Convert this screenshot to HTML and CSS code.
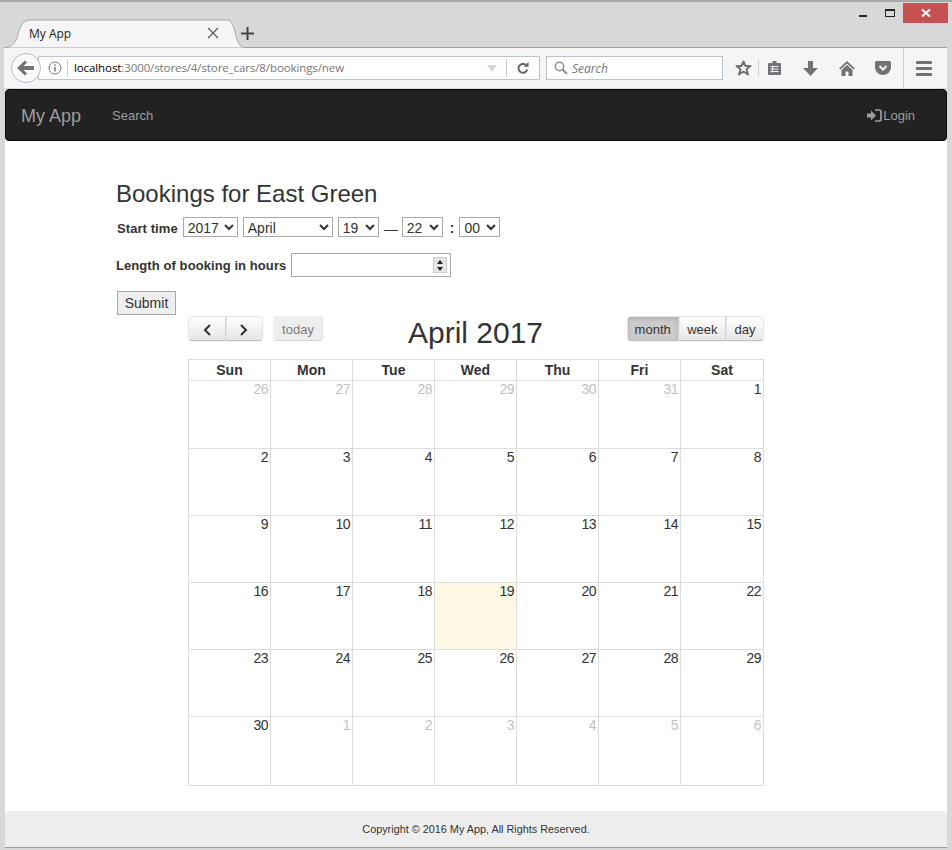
FILE: index.html
```html
<!DOCTYPE html>
<html>
<head>
  <meta charset="utf-8">
  <title>My App</title>
  <link rel="stylesheet" href="styles.css">
</head>
<body>
<div class="window">
  <div class="tabstrip">
    <div class="tab">
      <svg class="tab-shape" width="242" height="29" viewBox="0 0 242 29"><path d="M2 28.500C9 28 12 24 14 19C16 10 19 1 27 1H224C229 1 231 8 233 17C235 25 238 28.500 242 28.500" fill="#f5f5f5" stroke="#a3a9b1"/></svg>
      <span class="tab-title">My App</span>
      <svg class="tab-close" width="12" height="12" viewBox="0 0 12 12"><path d="M1 1L11 11M11 1L1 11" stroke="#555" stroke-width="1.1"/></svg>
    </div>
    <svg class="tab-new" width="13" height="13" viewBox="0 0 13 13"><path d="M6.500 0V13M0 6.500H13" stroke="#444" stroke-width="2"/></svg>
    <div class="winctl">
      <span class="win-min"></span>
      <span class="win-max"></span>
      <span class="win-close"><svg width="10" height="10" viewBox="0 0 10 10"><path d="M1 1.500L9 8.500M9 1.500L1 8.500" stroke="#fff" stroke-width="2"/></svg></span>
    </div>
  </div>

  <div class="toolbar">
    <div class="back"><svg width="18" height="16" viewBox="0 0 18 16"><path d="M0 8L8 0.500L10 2.500L6.500 6H17V10H6.500L10 13.500L8 15.500Z" fill="#6f7276"/></svg></div>
    <div class="urlbar">
      <svg class="info" width="14" height="14" viewBox="0 0 14 14"><circle cx="7" cy="7" r="6" fill="none" stroke="#777"/><path d="M7 6V10.500M7 3.200V4.800" stroke="#777" stroke-width="1.500"/></svg>
      <span class="url"><b>localhost</b>:3000/stores/4/store_cars/8/bookings/new</span>
      <svg class="dropmark" width="10" height="7" viewBox="0 0 10 7"><path d="M0 0H10L5 7Z" fill="#d3d5d8"/></svg>
      <span class="reload"><svg width="12" height="12" viewBox="0 0 12 12"><path d="M10.200 7.500A4.400 4.400 0 1 1 8.800 3" fill="none" stroke="#666" stroke-width="2"/><path d="M6.500 4.800H11.500V0Z" fill="#666"/></svg></span>
    </div>
    <div class="searchbar">
      <svg width="14" height="14" viewBox="0 0 14 14"><circle cx="5.500" cy="5.500" r="4.200" fill="none" stroke="#8b8f94" stroke-width="1.500"/><path d="M8.500 8.500L13 13" stroke="#8b8f94" stroke-width="2"/></svg>
      <span>Search</span>
    </div>
    <div class="tools">
      <svg class="t-star" width="17" height="16" viewBox="0 0 17 16"><path d="M8.500 1.500L10.500 6H15.500L11.500 9.200L13 14.500L8.500 11.500L4 14.500L5.500 9.200L1.500 6H6.500Z" fill="none" stroke="#6f7276" stroke-width="2" stroke-linejoin="round"/></svg>
      <span class="t-sep"></span>
      <svg class="t-clip" width="15" height="16" viewBox="0 0 15 16"><path d="M2 3H5.500V1H9.500V3H13Q14 3 14 4V14Q14 15 13 15H2Q1 15 1 14V4Q1 3 2 3Z" fill="#6f7276"/><path d="M3.500 6.500H11.500M3.500 9H11.500M3.500 11.500H11.500M5.500 6V12.500" stroke="#f5f5f5"/></svg>
      <svg class="t-down" width="15" height="15" viewBox="0 0 15 15"><path d="M5 0H10V7H15L7.500 15L0 7H5Z" fill="#6f7276"/></svg>
      <svg class="t-home" width="16" height="15" viewBox="0 0 16 15"><path d="M8 0L16 7.500L14.500 8.500L8 2.500L1.500 8.500L0 7.500Z" fill="#6f7276"/><path d="M8 4L13.500 9V15H9.500V10.500H6.500V15H2.500V9Z" fill="#6f7276"/></svg>
      <svg class="t-pocket" width="16" height="14" viewBox="0 0 16 14"><path d="M1.500 0H14.500Q16 0 16 1.500V6.500A8 7.500 0 0 1 0 6.500V1.500Q0 0 1.500 0Z" fill="#6f7276"/><path d="M4.500 5L8 8.500L11.500 5" fill="none" stroke="#f5f5f5" stroke-width="2"/></svg>
      <span class="t-sep t-sep-wide"></span>
      <span class="t-menu"><i></i><i></i><i></i></span>
    </div>
  </div>

  <div class="page">
    <nav class="navbar">
      <a class="brand">My App</a>
      <a class="navlink">Search</a>
      <a class="navlink login">
        <svg width="15" height="13" viewBox="0 0 15 13"><path d="M0 4.500H4V1.500L9 6.500L4 11.500V8.500H0Z" fill="#9d9d9d"/><path d="M8 1H12.500Q14 1 14 2.500V10.500Q14 12 12.500 12H8" fill="none" stroke="#9d9d9d" stroke-width="1.700"/></svg>Login</a>
    </nav>

    <div class="content">
      <h3>Bookings for East Green</h3>
      <form class="booking">
        <div class="field first">
          <label>Start time</label>
          <select class="w-year"><option>2017</option></select>
          <select class="w-month"><option>April</option></select>
          <select class="w-short"><option>19</option></select>
          <span class="dash">—</span>
          <select class="w-short"><option>22</option></select>
          <span class="colon">:</span>
          <select class="w-short"><option>00</option></select>
        </div>
        <div class="field">
          <label>Length of booking in hours</label>
          <span class="number"><span class="spin"><i class="up"></i><i class="down"></i></span></span>
        </div>
        <button type="button" class="submit">Submit</button>
      </form>

      <div class="calendar">
        <div class="fc-toolbar">
          <div class="fc-left">
            <div class="fc-group">
              <button type="button" class="fc-btn arrow"><svg width="10" height="12" viewBox="0 0 10 12"><path d="M8 1L3 6L8 11" fill="none" stroke="#333" stroke-width="2"/></svg></button>
              <button type="button" class="fc-btn arrow"><svg width="10" height="12" viewBox="0 0 10 12"><path d="M2 1L7 6L2 11" fill="none" stroke="#333" stroke-width="2"/></svg></button>
            </div>
            <button type="button" class="fc-btn solo disabled">today</button>
          </div>
          <h2>April 2017</h2>
          <div class="fc-right">
            <div class="fc-group">
              <button type="button" class="fc-btn active">month</button>
              <button type="button" class="fc-btn">week</button>
              <button type="button" class="fc-btn">day</button>
            </div>
          </div>
        </div>
        <table class="fc-grid">
          <thead>
            <tr><th>Sun</th><th>Mon</th><th>Tue</th><th>Wed</th><th>Thu</th><th>Fri</th><th>Sat</th></tr>
          </thead>
          <tbody>
            <tr class="top"><td class="other">26</td><td class="other">27</td><td class="other">28</td><td class="other">29</td><td class="other">30</td><td class="other">31</td><td>1</td></tr>
            <tr><td>2</td><td>3</td><td>4</td><td>5</td><td>6</td><td>7</td><td>8</td></tr>
            <tr><td>9</td><td>10</td><td>11</td><td>12</td><td>13</td><td>14</td><td>15</td></tr>
            <tr><td>16</td><td>17</td><td>18</td><td class="today">19</td><td>20</td><td>21</td><td>22</td></tr>
            <tr><td>23</td><td>24</td><td>25</td><td>26</td><td>27</td><td>28</td><td>29</td></tr>
            <tr class="last"><td>30</td><td class="other">1</td><td class="other">2</td><td class="other">3</td><td class="other">4</td><td class="other">5</td><td class="other">6</td></tr>
          </tbody>
        </table>
      </div>
    </div>

    <footer class="footer">Copyright © 2016 My App, All Rights Reserved.</footer>
  </div>
</div>
</body>
</html>
```

FILE: styles.css
```css
* { box-sizing: border-box; }
html, body { margin: 0; height: 100%; overflow: hidden; }
body {
  background: #d8d8d8;
  font-family: "Liberation Sans", Arial, sans-serif;
  font-size: 14px;
  color: #333;
}
.window {
  height: 850px;
  display: flex;
  flex-direction: column;
  border-top: 2px solid #a9a9a9;
}

/* browser chrome */
.tabstrip {
  height: 45px;
  display: flex;
  align-items: flex-end;
  flex: none;
  padding-left: 3px;
  position: relative;
}
.tab {
  width: 236px;
  height: 29px;
  position: relative;
  z-index: 2;
  margin-bottom: -1px;
  display: flex;
  align-items: center;
  padding: 0 20px 1px 26px;
}
.tab-shape { position: absolute; left: 0; top: 0; }
.tab-title {
  position: relative;
  flex: 1;
  font: 12px "Open Sans", sans-serif;
  color: #222;
}
.tab-close { position: relative; }
.tab-new { margin: 0 0 7px 2px; position: relative; z-index: 3; }
.winctl {
  position: absolute;
  top: 1px;
  right: 4px;
  display: flex;
  align-items: flex-start;
}
.win-min { width: 8px; height: 2px; background: #222; margin: 12px 18px 0 0; }
.win-max { width: 10px; height: 8px; border: 1px solid #222; border-top-width: 2px; margin: 6px 8px 0 0; }
.win-close {
  width: 45px;
  height: 20px;
  background: #c75050;
  display: flex;
  align-items: center;
  justify-content: center;
}

.toolbar {
  height: 41px;
  flex: none;
  margin: 0 5px 0 4px;
  background: #f5f5f5;
  border-top: 1px solid #9ca3ab;
  display: flex;
  align-items: center;
  position: relative;
  padding-left: 7px;
}
.back {
  width: 30px;
  height: 30px;
  border-radius: 50%;
  background: #fbfbfb;
  border: 1px solid #b4bcc6;
  display: flex;
  align-items: center;
  justify-content: center;
  position: relative;
  z-index: 1;
  flex: none;
}
.urlbar {
  width: 502px;
  height: 24px;
  margin-left: -3px;
  background: #fff;
  border: 1px solid #bcc4cc;
  display: flex;
  align-items: center;
  padding-left: 9px;
  flex: none;
}
.info { flex: none; }
.url {
  flex: 1;
  margin-left: 5px;
  padding-left: 6px;
  border-left: 1px solid #ccc;
  font: 11.500px/18px "Open Sans", sans-serif;
  letter-spacing: -.1px;
  color: #777;
}
.url b { font-weight: 400; color: #000; }
.dropmark { margin-right: 9px; }
.reload {
  width: 33px;
  height: 18px;
  border-left: 1px solid #ccc;
  display: flex;
  align-items: center;
  justify-content: center;
}
.searchbar {
  width: 177px;
  height: 24px;
  margin-left: 6px;
  background: #fff;
  border: 1px solid #bcc4cc;
  display: flex;
  align-items: center;
  gap: 4px;
  padding-left: 7px;
  font: italic 12px "Open Sans", sans-serif;
  color: #777;
  flex: none;
}
.tools {
  flex: 1;
  display: flex;
  align-items: center;
  height: 100%;
  padding-left: 12px;
}
.tools svg { flex: none; }
.t-sep { width: 1px; height: 16px; background: #ccc; margin: 0 8px 0 6px; }
.t-sep-wide { height: 40px; margin: 0 12px 0 12px; }
.t-down { margin-left: 21px; }
.t-home { margin-left: 21px; }
.t-pocket { margin-left: 20px; }
.t-menu { display: flex; flex-direction: column; gap: 3px; width: 16px; }
.t-menu i { height: 3px; background: #6f7276; border-radius: 1px; }

/* app */
.page {
  flex: 1;
  min-height: 0;
  margin: 1px 5px 2px 5px;
  background: #fff;
  border-bottom: 1px solid #999;
  display: flex;
  flex-direction: column;
}
.navbar {
  height: 52px;
  flex: none;
  background: #222;
  border: 1px solid #080808;
  border-radius: 4px;
  display: flex;
  align-items: center;
  color: #9d9d9d;
  font-size: 13px;
}
.brand { font-size: 18px; padding: 2px 16px 0 15px; }
.navlink { padding: 0 15px; }
.login {
  margin-left: auto;
  margin-right: 16px;
  display: flex;
  align-items: center;
  gap: 1px;
}
.content { flex: 1; padding: 39px 0 0 111px; }
h3 {
  margin: 0 0 9px;
  font-size: 24px;
  font-weight: 400;
  line-height: 27px;
}
.booking { padding-left: 1px; }
.field { display: flex; align-items: center; }
.field label {
  font-size: 13px;
  font-weight: 700;
  letter-spacing: .08px;
  margin-right: 5px;
}
.field select {
  height: 20px;
  margin-right: 5px;
  background: #fff;
  border: 1px solid #a9a9a9;
  border-radius: 0;
  font: 14px "Liberation Sans", Arial, sans-serif;
  color: #333;
  padding: 1px 0 0;
}
.first { height: 22px; margin-bottom: 15px; }
.first label { padding-top: 2px; }
.dash { margin-right: 4px; padding-top: 3px; }
.colon { font-weight: 700; margin: 0 5px 0 2px; padding-top: 2px; }
.w-year { width: 55px; }
.w-month { width: 90px; }
.w-short { width: 41px; }
.field:nth-child(2) { margin-bottom: 14px; }
.field:nth-child(2) label { margin-left: -1px; }
.number {
  width: 160px;
  height: 24px;
  border: 1px solid #a9a9a9;
  background: #fff;
  display: flex;
  align-items: center;
  justify-content: flex-end;
  padding-right: 3px;
}
.spin {
  width: 14px;
  height: 16px;
  background: #e6e6e6;
  border: 1px solid #d0d0d0;
  display: flex;
  flex-direction: column;
  align-items: center;
  justify-content: space-around;
}
.spin i { width: 0; height: 0; border: 3px solid transparent; }
.spin .up { border-top: 0; border-bottom: 4px solid #222; }
.spin .down { border-bottom: 0; border-top: 4px solid #222; }
.submit {
  display: block;
  width: 59px;
  height: 24px;
  padding: 0;
  background: #efefef;
  border: 1px solid #a9a9a9;
  font: 14px "Liberation Sans", Arial, sans-serif;
  color: #333;
}

/* calendar */
.calendar { width: 576px; margin: 1px 0 0 72px; }
.fc-toolbar {
  display: grid;
  grid-template-columns: 1fr auto 1fr;
  align-items: start;
  height: 43px;
}
.fc-toolbar h2 {
  margin: 0;
  padding-right: 1px;
  font-size: 30px;
  font-weight: 400;
  line-height: 33px;
}
.fc-left { display: flex; gap: 10px; }
.fc-right { display: flex; justify-content: flex-end; }
.fc-group { display: flex; }
.fc-btn {
  height: 25px;
  padding: 2px 7.500px 0;
  border: 1px solid #e6e6e6;
  border-bottom-color: #bfbfbf;
  border-right-color: #d5d5d5;
  background: linear-gradient(#fff, #e6e6e6);
  box-shadow: inset 0 1px 0 rgba(255,255,255,.2), 0 1px 2px rgba(0,0,0,.05);
  font: 13px "Liberation Sans", Arial, sans-serif;
  color: #333;
}
.fc-group .fc-btn:first-child { border-radius: 4px 0 0 4px; }
.fc-group .fc-btn:last-child { border-radius: 0 4px 4px 0; border-right-color: #e6e6e6; }
.fc-btn.solo { border-radius: 4px; width: 50px; padding: 2px 0 0; }
.fc-btn.arrow { width: 37.500px; padding: 2px 0 0; display: flex; align-items: center; justify-content: center; }
.fc-btn.disabled { opacity: .65; background: #e6e6e6; box-shadow: none; }
.fc-btn.active {
  width: 52px;
  padding: 2px 0 0;
  background: #ccc;
  box-shadow: inset 0 2px 4px rgba(0,0,0,.15), 0 1px 2px rgba(0,0,0,.05);
}
.fc-grid {
  width: 576px;
  table-layout: fixed;
  border-collapse: collapse;
}
.fc-grid th, .fc-grid td { border: 1px solid #ddd; padding: 0; }
.fc-grid th {
  width: 82px;
  height: 21px;
  font-size: 14px;
  font-weight: 700;
  text-align: center;
}
.fc-grid th:last-child { width: 83px; }
.fc-grid td {
  height: 67px;
  padding: 1px 2px 0 0;
  font-size: 14px;
  letter-spacing: -.5px;
  text-align: right;
  vertical-align: top;
  line-height: 14px;
}
.fc-grid .top td { height: 68px; }
.fc-grid .last td { height: 69px; }
.fc-grid td.other { color: #c2c2c2; }
.fc-grid td.today { background: #fcf8e3; }

.footer {
  height: 36px;
  flex: none;
  background: #eee;
  display: flex;
  align-items: center;
  justify-content: center;
  font-size: 10.850px;
  color: #333;
}
```
